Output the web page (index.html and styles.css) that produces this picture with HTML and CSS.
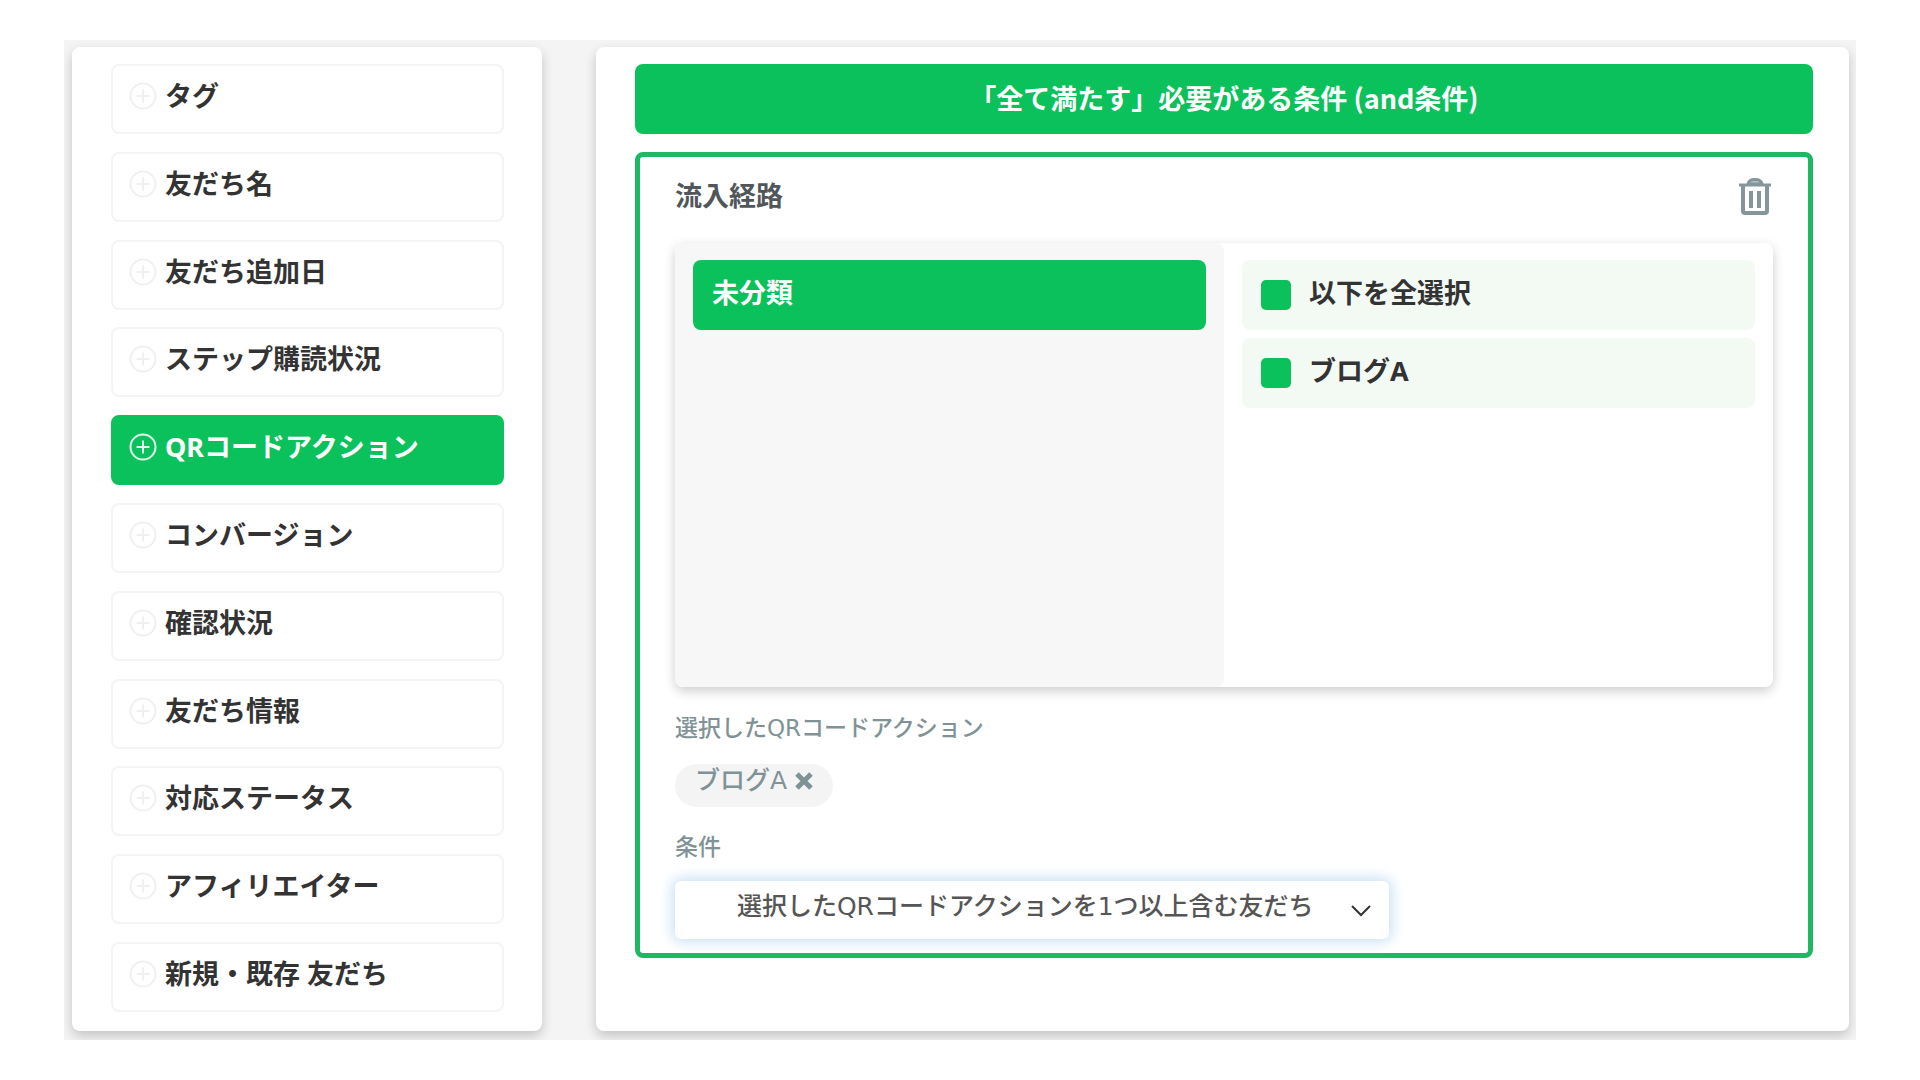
FILE: index.html
```html
<!DOCTYPE html>
<html lang="ja">
<head>
    <meta charset="UTF-8">
    <meta name="viewport" content="width=device-width, initial-scale=1.0">
    <title>絞り込み条件</title>
    <link rel="stylesheet" href="styles.css">
</head>
<body>
    <svg class="sprite" aria-hidden="true">
        <symbol id="plus" viewBox="0 0 28 28">
            <circle cx="14" cy="14" r="12.5" fill="none" stroke="currentColor" stroke-width="2"/>
            <path d="M14 7.5v13M7.5 14h13" stroke="currentColor" stroke-width="2"/>
        </symbol>
    </svg>
    <main class="container">
        <nav class="card menu">
            <button type="button" class="item"><svg class="plus"><use href="#plus"/></svg>タグ</button>
            <button type="button" class="item"><svg class="plus"><use href="#plus"/></svg>友だち名</button>
            <button type="button" class="item"><svg class="plus"><use href="#plus"/></svg>友だち追加日</button>
            <button type="button" class="item"><svg class="plus"><use href="#plus"/></svg>ステップ購読状況</button>
            <button type="button" class="item active"><svg class="plus"><use href="#plus"/></svg>QRコードアクション</button>
            <button type="button" class="item"><svg class="plus"><use href="#plus"/></svg>コンバージョン</button>
            <button type="button" class="item"><svg class="plus"><use href="#plus"/></svg>確認状況</button>
            <button type="button" class="item"><svg class="plus"><use href="#plus"/></svg>友だち情報</button>
            <button type="button" class="item"><svg class="plus"><use href="#plus"/></svg>対応ステータス</button>
            <button type="button" class="item"><svg class="plus"><use href="#plus"/></svg>アフィリエイター</button>
            <button type="button" class="item"><svg class="plus"><use href="#plus"/></svg>新規・既存 友だち</button>
        </nav>

        <section class="card content">
            <h1 class="heading">「全て満たす」必要がある条件 (and条件)</h1>
            <div class="panel">
                <div class="panel-head">
                    <h2 class="panel-title">流入経路</h2>
                    <button type="button" class="trash" aria-label="削除">
                        <svg viewBox="0 0 32 38" fill="none" stroke="currentColor">
                            <path d="M9 7C10 1 22 1 23 7z" fill="#b9c5c8" stroke-width="3"/>
                            <path d="M0 8h32" stroke-width="3"/>
                            <path d="M4 8v26q0 2 2 2h20q2 0 2-2V8" stroke-width="4"/>
                            <path d="M12 14v17M20 14v17" stroke-width="4"/>
                        </svg>
                    </button>
                </div>

                <div class="picker">
                    <div class="folders">
                        <button type="button" class="folder">未分類</button>
                    </div>
                    <div class="options">
                        <label class="option"><input type="checkbox" class="check" checked>以下を全選択</label>
                        <label class="option"><input type="checkbox" class="check" checked>ブログA</label>
                    </div>
                </div>

                <p class="label">選択したQRコードアクション</p>
                <div class="tag">
                    ブログA
                    <button type="button" class="remove" aria-label="解除">
                        <svg viewBox="0 0 18 18"><path d="M2 2l14 14M16 2l-14 14" stroke="currentColor" stroke-width="5"/></svg>
                    </button>
                </div>

                <label class="label" for="condition">条件</label>
                <div class="select-box">
                    <select id="condition" class="select">
                        <option>選択したQRコードアクションを1つ以上含む友だち</option>
                    </select>
                    <svg class="chevron" viewBox="0 0 20 12"><path d="M1 1l9 9 9-9" fill="none" stroke="#333" stroke-width="2"/></svg>
                </div>
            </div>
        </section>
    </main>
</body>
</html>
```
FILE: styles.css
```css
*{
    box-sizing: border-box;
}
body{
    margin: 0;
    padding: 40px 64px;
    background-color: #fff;
    color: #333;
    font-family: "Noto Sans", "Noto Sans CJK JP", sans-serif;
    font-size: 27px;
    line-height: 34px;
}
button, select{
    font: inherit;
    color: inherit;
    cursor: pointer;
}
.sprite{
    display: none;
}
.container{
    display: grid;
    grid-template-columns: 3fr 8fr;
    gap: 54px;
    min-height: calc(100vh - 80px);
    padding: 7px 7px 9px 8px;
    background-color: #f4f4f4;
    overflow: hidden;
}
.card{
    background-color: #fff;
    border-radius: 8px;
    box-shadow: 0 5px 12px rgba(0, 0, 0, 0.2);
}

/* left menu */
.menu{
    display: flex;
    flex-direction: column;
    justify-content: space-between;
    padding: 17px 38px 19px 39px;
}
.item{
    display: flex;
    align-items: center;
    gap: 8px;
    width: 100%;
    padding: 13px 16px 19px;
    border: 2px solid #f4f4f4;
    border-radius: 8px;
    background-color: #fff;
    font-weight: 700;
    text-align: left;
}
.plus{
    width: 28px;
    height: 28px;
    color: #f0f0f0;
}
.item.active{
    border-color: #0bc15c;
    background-color: #0bc15c;
    color: #fff;
}
.active .plus{
    color: #e6fff0;
}

/* right side */
.content{
    padding: 17px 36px 18px 39px;
}
.heading{
    margin: 0 0 18px;
    padding: 17px 20px 19px;
    border-radius: 8px;
    background-color: #0bc15c;
    color: #fff;
    font-family: "Noto Sans CJK JP", sans-serif;
    font-size: 27px;
    text-align: center;
}
.panel{
    padding: 20px 35px 14px;
    border: 5px solid #1db862;
    border-radius: 8px;
}
.panel-head{
    display: flex;
    justify-content: space-between;
    align-items: center;
    margin-bottom: 28px;
    padding-right: 2px;
}
.panel-title{
    margin: 0;
    color: #50565a;
    font-size: 27px;
    font-weight: 700;
}
.trash{
    width: 32px;
    height: 38px;
    padding: 0;
    border: 0;
    background: none;
    color: #84969a;
}
.trash svg{
    display: block;
}
.picker{
    display: grid;
    grid-template-columns: 1fr 1fr;
    min-height: 444px;
    margin-bottom: 24px;
    border-radius: 8px;
    box-shadow: 0 4px 12px rgba(0, 0, 0, 0.2);
}
.folders, .options{
    display: flex;
    flex-direction: column;
    gap: 8px;
    padding: 17px 18px;
}
.folders{
    border-radius: 8px;
    background-color: #f7f7f7;
}
.folder, .option{
    display: flex;
    align-items: center;
    height: 70px;
    padding: 0 19px 4px;
    border: 0;
    border-radius: 8px;
    font-weight: 700;
}
.folder{
    background-color: #0bc15c;
    color: #fff;
}
.option{
    gap: 18px;
    background-color: #f3faf3;
}
.check{
    appearance: none;
    width: 30px;
    height: 30px;
    margin: 4px 0 0;
    border-radius: 5px;
    background-color: #fff;
}
.check:checked{
    background-color: #0bc15c;
}
.label, .tag, .select{
    font-family: "DejaVu Sans", "Noto Sans CJK JP", sans-serif;
    font-weight: 500;
}
.label{
    display: block;
    margin: 0 0 17px;
    color: #7f9397;
    font-size: 23px;
}
.tag{
    display: inline-flex;
    align-items: center;
    gap: 8px;
    margin-bottom: 23px;
    padding: 0 20px 9px;
    border-radius: 22px;
    background-color: #f4f4f4;
    color: #7f9397;
    font-size: 25px;
}
.remove{
    width: 18px;
    height: 18px;
    padding: 0;
    border: 0;
    background: none;
}
.remove svg{
    display: block;
}
.select-box{
    position: relative;
    width: 65%;
}
.select{
    display: block;
    appearance: none;
    width: 100%;
    height: 58px;
    padding: 0 60px 6px 62px;
    border: 0;
    border-radius: 6px;
    background-color: #fff;
    box-shadow: 0 0 14px 3px #c9e0f5;
    color: #555;
    font-size: 25px;
}
.chevron{
    position: absolute;
    top: 24px;
    right: 18px;
    width: 20px;
    height: 12px;
    pointer-events: none;
}
```
